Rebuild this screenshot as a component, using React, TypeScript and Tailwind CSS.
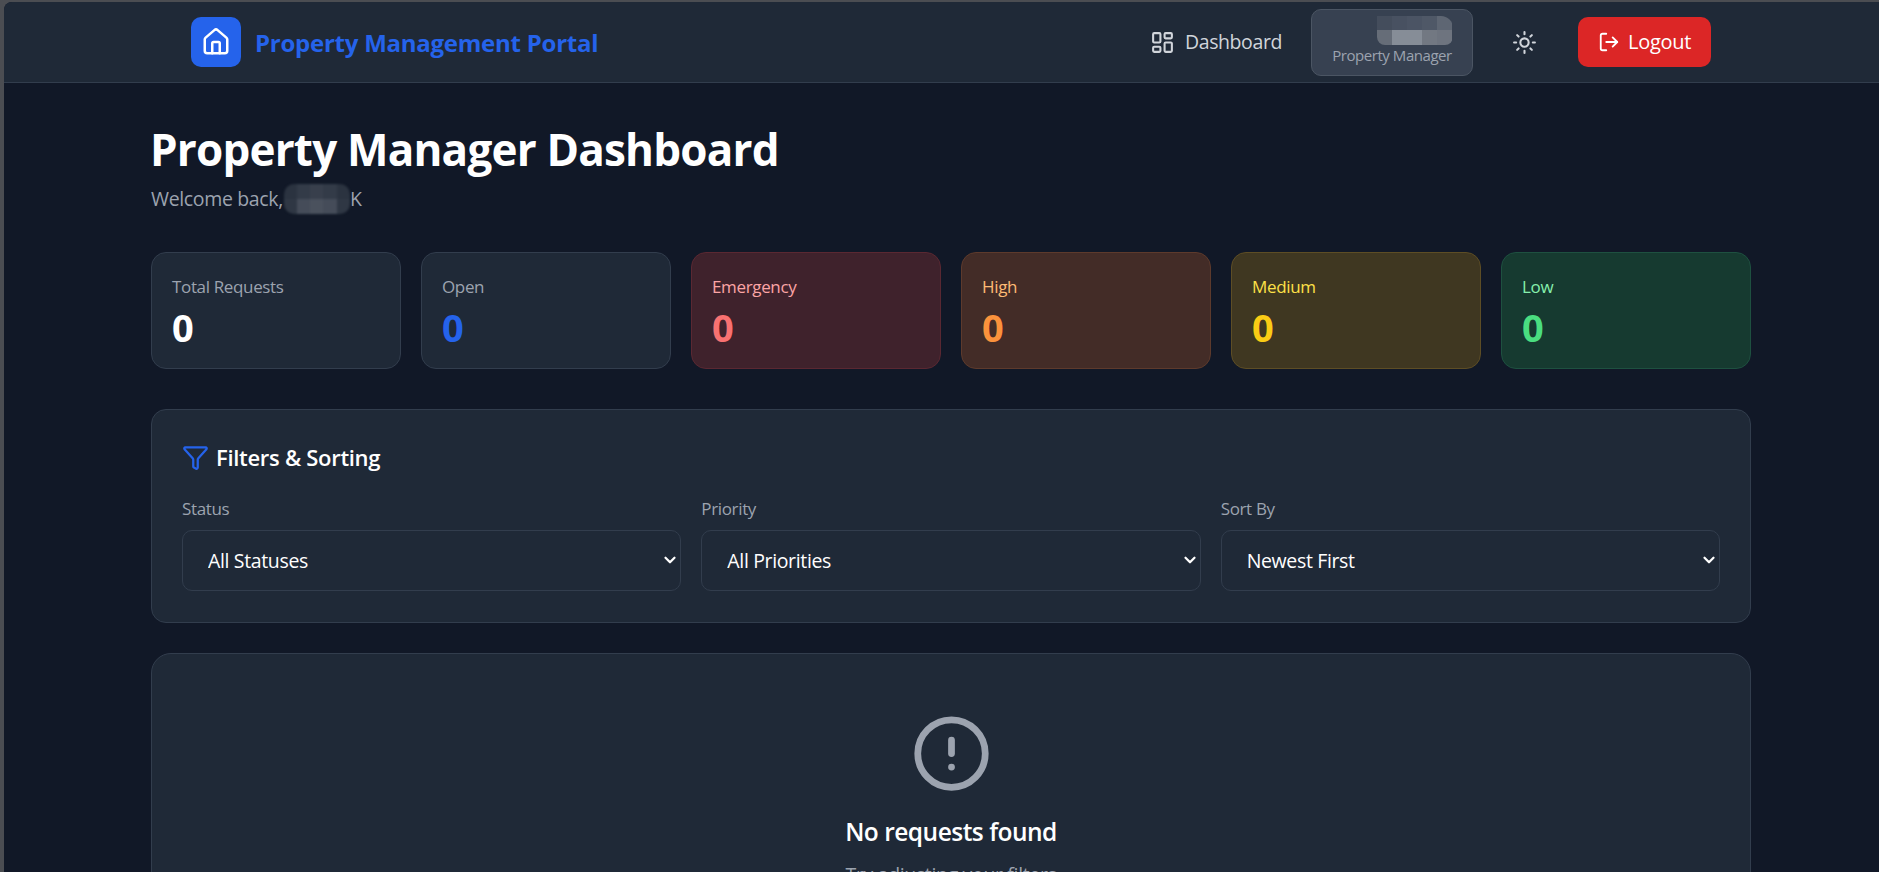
import { ChevronDown, CircleAlert, Funnel, House, LayoutDashboard, LogOut, Sun } from "lucide-react"

const stats = [
  { label: "Total Requests", card: "border-[#323d4d] bg-[#1f2937]", labelColor: "text-[#9ca3af]", valueColor: "text-white" },
  { label: "Open", card: "border-[#323d4d] bg-[#1f2937]", labelColor: "text-[#9ca3af]", valueColor: "text-[#2563eb]" },
  { label: "Emergency", card: "border-[#5a2832] bg-[#3f222c]", labelColor: "text-[#fca5a5]", valueColor: "text-[#f87171]" },
  { label: "High", card: "border-[#5d3a2c] bg-[#432c27]", labelColor: "text-[#fdba74]", valueColor: "text-[#fb923c]" },
  { label: "Medium", card: "border-[#5d4d25] bg-[#3f3721]", labelColor: "text-[#fde047]", valueColor: "text-[#facc15]" },
  { label: "Low", card: "border-[#1e5040] bg-[#163a30]", labelColor: "text-[#86efac]", valueColor: "text-[#4ade80]" },
]

const filters = [
  { label: "Status", options: ["All Statuses", "Open", "In Progress", "Completed"] },
  { label: "Priority", options: ["All Priorities", "Emergency", "High", "Medium", "Low"] },
  { label: "Sort By", options: ["Newest First", "Oldest First", "Priority"] },
]

// pixelated cells standing in for the blurred-out user name
const nameMosaic = [
  "bg-[#444d5c]", "bg-[#485161]", "bg-[#4b5464]", "bg-[#4f5867]", "bg-[#5e6673]",
  "bg-[#666d78]", "bg-[#868d97]", "bg-[#868d97]", "bg-[#727882]", "bg-[#6e747f]",
]

const welcomeMosaic = [
  "bg-[#2b3340]", "bg-[#333b48]", "bg-[#383f4c]", "bg-[#333b48]", "bg-[#2b3340]",
  "bg-[#2f3744]", "bg-[#454c59]", "bg-[#4a515d]", "bg-[#454c59]", "bg-[#2f3744]",
]

function FilterSelect({ label, options }: { label: string; options: string[] }) {
  return (
    <div>
      <label className="mb-[10px] block text-[17px] leading-[22px] font-medium tracking-[-0.35px] text-[#9ca3af]">
        {label}
      </label>
      <div className="relative">
        <select className="h-[61px] w-full appearance-none rounded-[10px] border border-[#323d4d] bg-[#1f2937] pl-[25px] pr-[24px] pt-[1px] text-[19.5px] tracking-[-0.35px] text-white">
          {options.map((option) => (
            <option key={option}>{option}</option>
          ))}
        </select>
        <ChevronDown strokeWidth={3} className="pointer-events-none absolute right-[2px] top-[21px] h-[18px] w-[18px] text-white" />
      </div>
    </div>
  )
}

export default function App() {
  return (
    <div className="h-[872px] overflow-hidden bg-[#4b4d52] pl-[4px] pt-[2px] font-['Open_Sans',sans-serif]">
      <div className="h-[870px] overflow-hidden rounded-tl-[8px] bg-[#111827]">
        <header className="h-[81px] border-b border-[#323d4d] bg-[#1f2937]">
          <div className="flex h-[80px] items-center justify-between pl-[187px] pr-[168px]">
            <div className="flex items-center gap-[14px]">
              <div className="flex h-[50px] w-[50px] items-center justify-center rounded-[10px] bg-[#2563eb]">
                <House className="h-[30px] w-[30px] text-white" />
              </div>
              <span className="pt-[1px] text-[24px] font-bold tracking-[-0.25px] text-[#2563eb]">
                Property Management Portal
              </span>
            </div>
            <nav className="flex items-center">
              <a className="mr-[29px] flex items-center gap-[10px] text-[19.5px] tracking-[-0.4px] text-[#d1d5db]">
                <LayoutDashboard className="h-[25px] w-[25px]" />
                Dashboard
              </a>
              <div className="mr-[39px] flex h-[67px] w-[162px] flex-col items-center rounded-[10px] border border-[#4b5563] bg-[#374151] pt-[6px]">
                <div className="ml-[45px] grid h-[29px] w-[76px] grid-cols-5 grid-rows-2 overflow-hidden rounded-tr-[12px] rounded-bl-[8px] rounded-br-[8px]">
                  {nameMosaic.map((color, i) => (
                    <span key={i} className={color} />
                  ))}
                </div>
                <span className="text-[15px] leading-[20px] tracking-[-0.45px] text-[#9ca3af]">Property Manager</span>
              </div>
              <Sun className="mr-[41px] h-[25px] w-[25px] text-[#d1d5db]" />
              <button className="flex h-[50px] w-[133px] items-center justify-center gap-[8px] rounded-[10px] bg-[#dc2626] text-[20px] font-medium tracking-[-0.3px] text-white">
                <LogOut className="h-[22px] w-[22px]" />
                Logout
              </button>
            </nav>
          </div>
        </header>

        <main className="mx-[147px] w-[1600px] pt-[41px]">
          <h1 className="ml-[-1px] text-[44px] leading-[50px] font-bold tracking-[-0.8px] text-white">
            Property Manager Dashboard
          </h1>
          <p className="mt-[10px] flex items-center text-[19.5px] leading-[30px] tracking-[-0.35px] text-[#9ca3af]">
            Welcome back,
            <span className="ml-[1px] grid h-[30px] w-[66px] grid-cols-5 grid-rows-2 overflow-hidden rounded-[10px] blur-[1px]">
              {welcomeMosaic.map((color, i) => (
                <span key={i} className={color} />
              ))}
            </span>
            K
          </p>

          <div className="mt-[38px] grid grid-cols-6 gap-[20px]">
            {stats.map((stat) => (
              <div key={stat.label} className={`h-[117px] rounded-[15px] border px-[20px] pt-[22px] ${stat.card}`}>
                <p className={`text-[17px] leading-[24px] tracking-[-0.35px] ${stat.labelColor}`}>{stat.label}</p>
                <p className={`mt-[5px] text-[38px] leading-[46px] font-bold ${stat.valueColor}`}>0</p>
              </div>
            ))}
          </div>

          <section className="mt-[40px] h-[214px] rounded-[15px] border border-[#323d4d] bg-[#1f2937] px-[30px] pt-[32px]">
            <div className="flex items-center gap-[7px]">
              <Funnel className="h-[27px] w-[27px] text-[#2563eb]" />
              <h2 className="text-[22px] leading-[30px] font-semibold tracking-[-0.3px] text-white">Filters &amp; Sorting</h2>
            </div>
            <div className="mt-[26px] grid grid-cols-3 gap-[20px]">
              {filters.map((filter) => (
                <FilterSelect key={filter.label} label={filter.label} options={filter.options} />
              ))}
            </div>
          </section>

          <section className="mt-[30px] flex h-[400px] flex-col items-center rounded-[20px] border border-[#323d4d] bg-[#1f2937] pt-[59px]">
            <CircleAlert className="h-[81px] w-[81px] text-[#9ca3af]" />
            <h3 className="mt-[20px] text-[24.5px] leading-[36px] font-semibold tracking-[-0.5px] text-white">No requests found</h3>
            <p className="mt-[10px] text-[19.5px] leading-[30px] tracking-[-0.35px] text-[#9ca3af]">Try adjusting your filters</p>
          </section>
        </main>
      </div>
    </div>
  )
}
